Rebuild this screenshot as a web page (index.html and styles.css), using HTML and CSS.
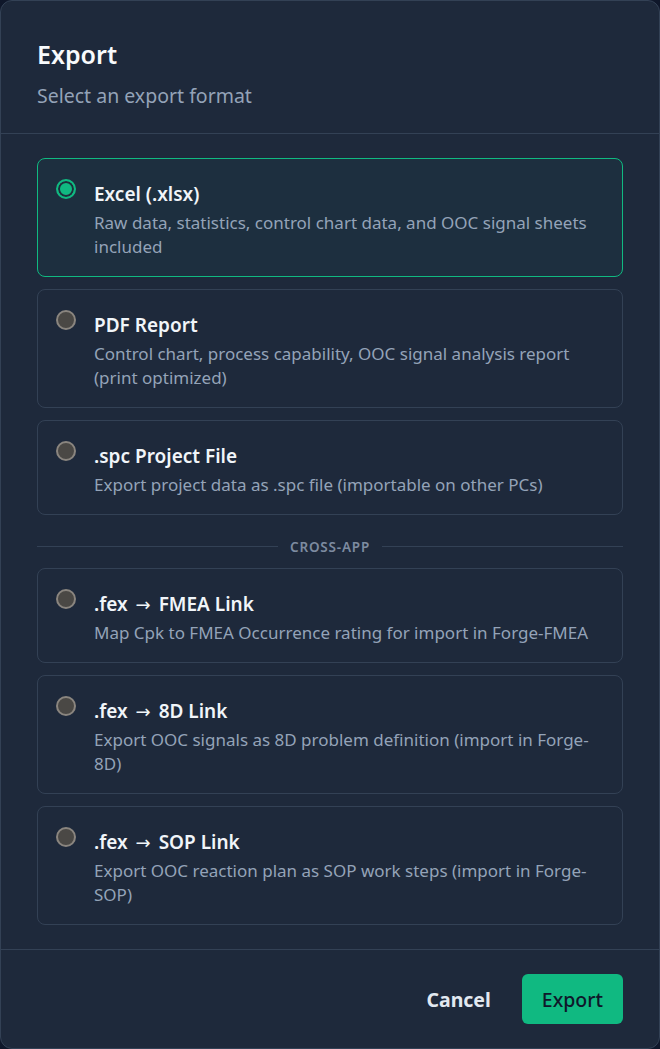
FILE: index.html
```html
<!DOCTYPE html>
<html lang="en">
<head>
<meta charset="utf-8">
<title>Export</title>
<link rel="stylesheet" href="styles.css">
</head>
<body>
<div class="dialog">
  <header class="head">
    <h1 class="title">Export</h1>
    <p class="subtitle">Select an export format</p>
  </header>
  <div class="body">
    <label class="opt selected">
      <span class="radio checked"></span>
      <span class="text">
        <span class="opt-title">Excel (.xlsx)</span>
        <span class="opt-desc">Raw data, statistics, control chart data, and OOC signal sheets included</span>
      </span>
    </label>
    <label class="opt">
      <span class="radio"></span>
      <span class="text">
        <span class="opt-title">PDF Report</span>
        <span class="opt-desc">Control chart, process capability, OOC signal analysis report (print optimized)</span>
      </span>
    </label>
    <label class="opt">
      <span class="radio"></span>
      <span class="text">
        <span class="opt-title">.spc Project File</span>
        <span class="opt-desc">Export project data as .spc file (importable on other PCs)</span>
      </span>
    </label>
    <div class="sep"><span>Cross-App</span></div>
    <label class="opt">
      <span class="radio"></span>
      <span class="text">
        <span class="opt-title">.fex <span class="arrow">→</span> FMEA Link</span>
        <span class="opt-desc">Map Cpk to FMEA Occurrence rating for import in Forge-FMEA</span>
      </span>
    </label>
    <label class="opt">
      <span class="radio"></span>
      <span class="text">
        <span class="opt-title">.fex <span class="arrow">→</span> 8D Link</span>
        <span class="opt-desc">Export OOC signals as 8D problem definition (import in Forge-8D)</span>
      </span>
    </label>
    <label class="opt">
      <span class="radio"></span>
      <span class="text">
        <span class="opt-title">.fex <span class="arrow">→</span> SOP Link</span>
        <span class="opt-desc">Export OOC reaction plan as SOP work steps (import in Forge-SOP)</span>
      </span>
    </label>
  </div>
  <footer class="foot">
    <button class="btn cancel">Cancel</button>
    <button class="btn primary">Export</button>
  </footer>
</div>
</body>
</html>
```
FILE: styles.css
```css
* { box-sizing: border-box; }
html, body { margin: 0; padding: 0; background: #0f172a; }
body {
  font-family: "Noto Sans", "Open Sans", sans-serif;
  color: #f1f5f9;
}
.dialog {
  width: 660px;
  height: 1049px;
  background: #1e293b;
  border: 1px solid #334155;
  border-radius: 12px;
  display: flex;
  flex-direction: column;
  overflow: hidden;
}
.head {
  padding: 37px 36px 23px;
  border-bottom: 1px solid #334155;
}
.title {
  margin: 0;
  font-size: 25px;
  line-height: 32px;
  font-weight: 600;
  color: #f8fafc;
}
.subtitle {
  margin: 12px 0 0;
  font-size: 19.5px;
  line-height: 28px;
  color: #94a3b8;
}
.body {
  flex: 1;
  min-height: 0;
  padding: 24px 36px;
  display: flex;
  flex-direction: column;
  gap: 12px;
}
.opt {
  display: flex;
  gap: 18px;
  padding: 21px 20px 17px 18px;
  border: 1px solid #334155;
  border-radius: 8px;
  cursor: pointer;
}
.opt.selected {
  border-color: #10b981;
  background: rgba(16, 185, 129, 0.05);
}
.radio {
  flex: none;
  width: 20px;
  height: 20px;
  margin-top: -1px;
  border-radius: 50%;
  background: #4a4845;
  border: 2px solid #8a857f;
}
.radio.checked {
  background: #10b981;
  border: 2px solid #10b981;
  box-shadow: inset 0 0 0 2px #1e2f3c;
}
.text { display: flex; flex-direction: column; }
.opt-title {
  font-size: 19px;
  line-height: 29px;
  font-weight: 600;
  color: #f1f5f9;
}
.arrow {
  font-family: "DejaVu Sans", sans-serif;
  font-weight: 400;
  font-size: 18px;
  margin: 0 3px;
}
.opt-desc {
  margin-top: 2px;
  font-size: 17px;
  line-height: 24px;
  color: #94a3b8;
}
.sep {
  display: flex;
  align-items: center;
  gap: 12px;
  margin-top: 10px;
  height: 20px;
  font-size: 13.5px;
  font-weight: 600;
  letter-spacing: 0.06em;
  text-transform: uppercase;
  color: #7d8ba0;
}
.sep::before, .sep::after {
  content: "";
  flex: 1;
  height: 1px;
  background: #334155;
}
.foot {
  border-top: 1px solid #334155;
  padding: 24px 36px 24px;
  display: flex;
  justify-content: flex-end;
  gap: 11px;
}
.btn {
  font-family: inherit;
  font-size: 19.5px;
  height: 50px;
  padding: 0 20px;
  border: none;
  border-radius: 6px;
  cursor: pointer;
}
.cancel {
  background: transparent;
  color: #e2e8f0;
  font-weight: 700;
}
.primary {
  background: #10b981;
  color: #0f172a;
  font-weight: 500;
}
```
